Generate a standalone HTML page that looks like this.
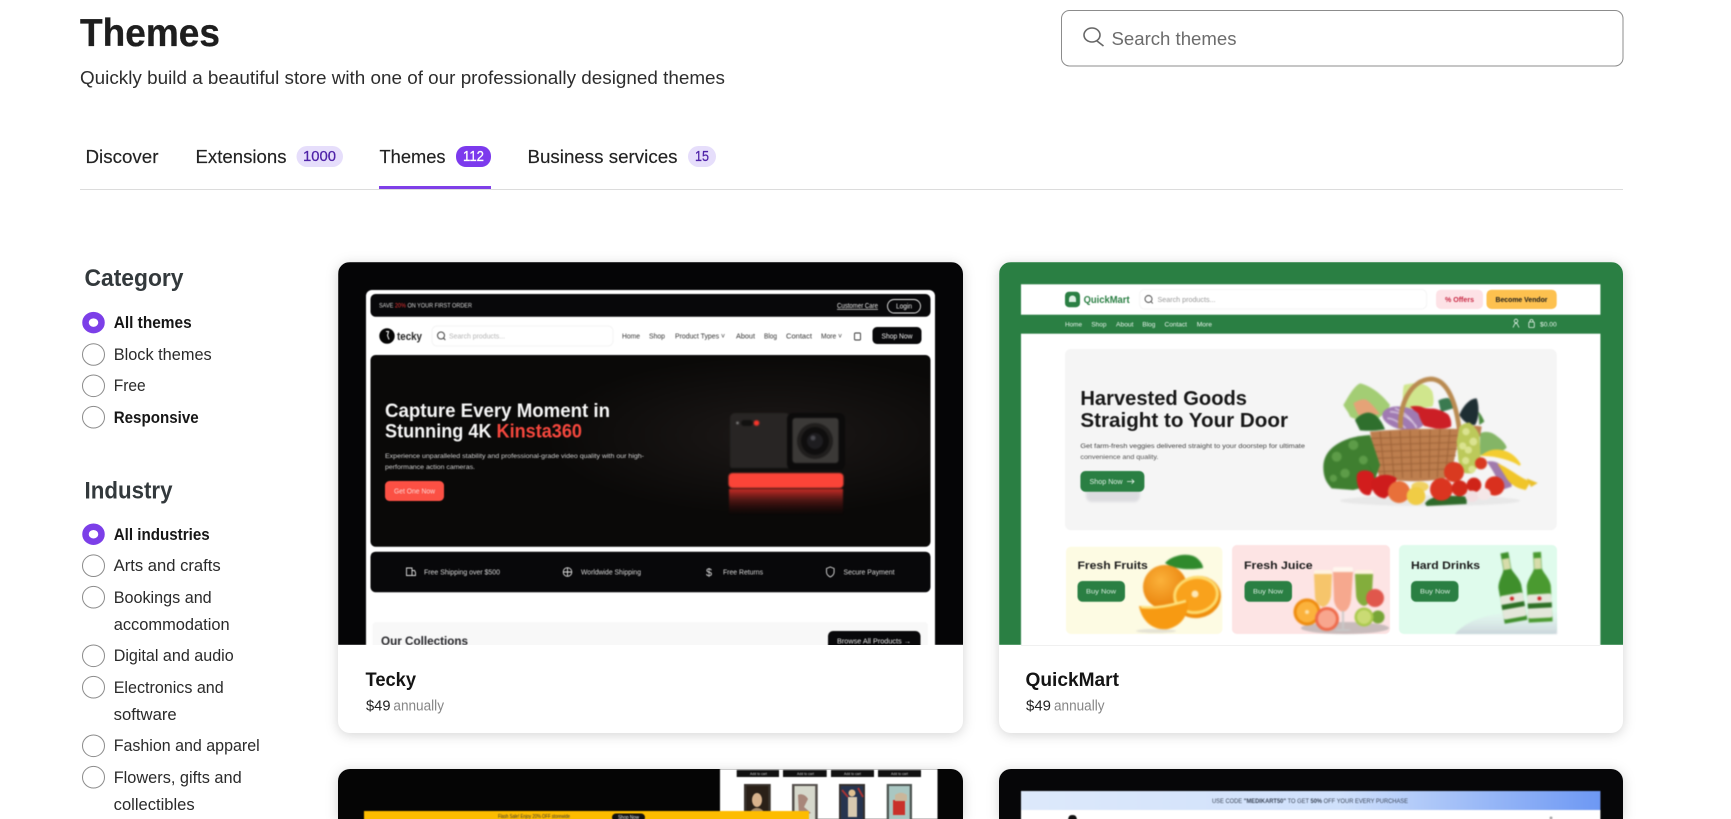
<!DOCTYPE html>
<html lang="en"><head><meta charset="utf-8"><title>Themes</title>
<style>
html,body{margin:0;padding:0;background:#fff;width:1731px;height:819px;overflow:hidden}
svg{display:block;position:absolute;left:0;top:0}
text{font-family:"Liberation Sans",Arial,sans-serif}
.b{font-weight:700}
.t{font-size:18.500px;fill:#222;stroke:#222;stroke-width:.15px}
.i{font-size:16.500px;fill:#2a2a2a}
.ib{font-size:16.500px;fill:#161616;font-weight:700}
.h{font-size:24px;fill:#33393c;font-weight:700}
.cap{font-size:19px;fill:#141414;font-weight:700}
.nb{font-size:14.500px;stroke-width:.25px}
.card{filter:drop-shadow(0 2px 6px rgba(0,0,0,.17))}
.soft{filter:blur(.45px)}
.ill{filter:blur(.8px)}
.softer{filter:blur(1.2px)}
.rd{fill:#fff;stroke:#8b8b8b;stroke-width:1}
.ra{fill:#fff;stroke:#7c3fe8;stroke-width:6.500}
</style></head><body>
<svg width="1731" height="819" viewBox="0 0 1731 819" xmlns="http://www.w3.org/2000/svg">
<defs>
<clipPath id="c1"><path d="M338 645V274a12 12 0 0 1 12-12h601a12 12 0 0 1 12 12V645z"/></clipPath>
<clipPath id="c2"><path d="M999 645V274a12 12 0 0 1 12-12h600a12 12 0 0 1 12 12V645z"/></clipPath>
<clipPath id="c3"><path d="M338 819V781a12 12 0 0 1 12-12h601a12 12 0 0 1 12 12V819z"/></clipPath>
<clipPath id="c4"><path d="M999 819V781a12 12 0 0 1 12-12h600a12 12 0 0 1 12 12V819z"/></clipPath>
<linearGradient id="refl" x1="0" y1="0" x2="0" y2="1"><stop offset="0" stop-color="#e8322a" stop-opacity=".85"/><stop offset=".45" stop-color="#a82520" stop-opacity=".4"/><stop offset="1" stop-color="#500" stop-opacity="0"/></linearGradient>
<radialGradient id="glow" cx=".72" cy=".42" r=".42"><stop offset="0" stop-color="#1c1817"/><stop offset="1" stop-color="#0a0908"/></radialGradient>
<linearGradient id="promo" x1="0" y1="0" x2="1" y2="0"><stop offset="0" stop-color="#dde9fb"/><stop offset=".55" stop-color="#cfe0fb"/><stop offset="1" stop-color="#6d98f4"/></linearGradient>
<linearGradient id="ice" x1="0" y1="0" x2="0" y2="1"><stop offset="0" stop-color="#e4eef0" stop-opacity=".3"/><stop offset="1" stop-color="#c9d4da"/></linearGradient>
<radialGradient id="org" cx=".4" cy=".35" r=".7"><stop offset="0" stop-color="#fbb13a"/><stop offset="1" stop-color="#e87f08"/></radialGradient>
</defs>

<!-- Header -->
<text x="80" y="46" font-size="39" class="b" fill="#1e1e1e" stroke="#1e1e1e" stroke-width=".3" textLength="140" lengthAdjust="spacingAndGlyphs">Themes</text>
<text x="80" y="84" font-size="18.500" fill="#2d2d2d" textLength="645" lengthAdjust="spacingAndGlyphs">Quickly build a beautiful store with one of our professionally designed themes</text>

<rect x="1061.500" y="10.500" width="561.500" height="55.500" rx="8" fill="#fff" stroke="#8c8c8c"/>
<ellipse cx="1092" cy="35" rx="8" ry="7" fill="none" stroke="#666" stroke-width="1.600"/>
<path d="M1097 41L1103.500 46" stroke="#666" stroke-width="1.600" fill="none"/>
<text x="1111.500" y="45" font-size="18.500" fill="#6c6c6c" textLength="125" lengthAdjust="spacingAndGlyphs">Search themes</text>

<!-- Tabs -->
<text x="85.500" y="163" class="t" textLength="73" lengthAdjust="spacingAndGlyphs">Discover</text>
<text x="195.500" y="163" class="t" textLength="91" lengthAdjust="spacingAndGlyphs">Extensions</text>
<rect x="296.500" y="146" width="46.500" height="21" rx="10.500" fill="#e6defb"/>
<text x="303" y="161" class="nb" fill="#4f22a8" stroke="#4f22a8" textLength="33" lengthAdjust="spacingAndGlyphs">1000</text>
<text x="379.500" y="163" class="t" textLength="66" lengthAdjust="spacingAndGlyphs">Themes</text>
<rect x="456" y="146" width="35" height="21" rx="10" fill="#7c3aed"/>
<text x="463" y="161" class="nb" fill="#fff" stroke="#fff" textLength="21" lengthAdjust="spacingAndGlyphs">112</text>
<text x="527.500" y="163" class="t" textLength="150" lengthAdjust="spacingAndGlyphs">Business services</text>
<rect x="688" y="146" width="28" height="21" rx="10.500" fill="#e6defb"/>
<text x="695" y="161" class="nb" fill="#4f22a8" stroke="#4f22a8" textLength="14" lengthAdjust="spacingAndGlyphs">15</text>
<rect x="80" y="189" width="1543" height="1" fill="#dcdcdc"/>
<rect x="379" y="186" width="112" height="3" fill="#7f3fe8"/>

<!-- Sidebar -->
<text x="84.500" y="286" class="h" textLength="99" lengthAdjust="spacingAndGlyphs">Category</text>
<ellipse class="ra" cx="93.500" cy="322.600" rx="8" ry="7.500"/>
<text x="113.700" y="328" class="ib" textLength="78" lengthAdjust="spacingAndGlyphs">All themes</text>
<ellipse class="rd" cx="93.500" cy="354.500" rx="11" ry="10.800"/>
<text x="113.700" y="360" class="i" textLength="98" lengthAdjust="spacingAndGlyphs">Block themes</text>
<ellipse class="rd" cx="93.500" cy="385.800" rx="11" ry="10.800"/>
<text x="113.700" y="391" class="i" textLength="32" lengthAdjust="spacingAndGlyphs">Free</text>
<ellipse class="rd" cx="93.500" cy="417.200" rx="11" ry="10.800"/>
<text x="113.700" y="423" class="ib" textLength="85" lengthAdjust="spacingAndGlyphs">Responsive</text>

<text x="84.500" y="498.500" class="h" textLength="88" lengthAdjust="spacingAndGlyphs">Industry</text>
<ellipse class="ra" cx="93.500" cy="534.200" rx="8" ry="7.500"/>
<text x="113.700" y="540" class="ib" textLength="96" lengthAdjust="spacingAndGlyphs">All industries</text>
<ellipse class="rd" cx="93.500" cy="565.700" rx="11" ry="10.800"/>
<text x="113.700" y="571" class="i" textLength="107" lengthAdjust="spacingAndGlyphs">Arts and crafts</text>
<ellipse class="rd" cx="93.500" cy="597.200" rx="11" ry="10.800"/>
<text x="113.700" y="603" class="i" textLength="98" lengthAdjust="spacingAndGlyphs">Bookings and</text>
<text x="113.700" y="630" class="i" textLength="116" lengthAdjust="spacingAndGlyphs">accommodation</text>
<ellipse class="rd" cx="93.500" cy="655.800" rx="11" ry="10.800"/>
<text x="113.700" y="661" class="i" textLength="120" lengthAdjust="spacingAndGlyphs">Digital and audio</text>
<ellipse class="rd" cx="93.500" cy="687.200" rx="11" ry="10.800"/>
<text x="113.700" y="693" class="i" textLength="110" lengthAdjust="spacingAndGlyphs">Electronics and</text>
<text x="113.700" y="720" class="i" textLength="63" lengthAdjust="spacingAndGlyphs">software</text>
<ellipse class="rd" cx="93.500" cy="745.800" rx="11" ry="10.800"/>
<text x="113.700" y="751" class="i" textLength="146" lengthAdjust="spacingAndGlyphs">Fashion and apparel</text>
<ellipse class="rd" cx="93.500" cy="777.200" rx="11" ry="10.800"/>
<text x="113.700" y="783" class="i" textLength="128" lengthAdjust="spacingAndGlyphs">Flowers, gifts and</text>
<text x="113.700" y="810" class="i" textLength="81" lengthAdjust="spacingAndGlyphs">collectibles</text>

<!-- Card bases -->
<rect class="card" x="338" y="262" width="625" height="471" rx="12" fill="#fff"/>
<rect class="card" x="999" y="262" width="624" height="471" rx="12" fill="#fff"/>
<path class="card" d="M338 819V781a12 12 0 0 1 12-12h601a12 12 0 0 1 12 12V819z" fill="#050505"/>
<path class="card" d="M999 819V781a12 12 0 0 1 12-12h600a12 12 0 0 1 12 12V819z" fill="#060608"/>

<!-- Tecky preview -->
<g clip-path="url(#c1)"><g class="soft">
<rect x="338" y="262" width="626" height="383" fill="#050506"/>
<path d="M366 645V296a6 6 0 0 1 6-6h557a6 6 0 0 1 6 6V645z" fill="#fff"/>
<rect x="370.500" y="294" width="560" height="22.700" rx="5" fill="#08080a"/>
<text x="379" y="307.500" font-size="6.500" fill="#d8d8d8" textLength="93" lengthAdjust="spacingAndGlyphs">SAVE <tspan fill="#e33">20%</tspan> ON YOUR FIRST ORDER</text>
<text x="837" y="308" font-size="7" fill="#e8e8e8" text-decoration="underline" textLength="41" lengthAdjust="spacingAndGlyphs">Customer Care</text>
<rect x="887.500" y="299.500" width="33" height="13.500" rx="6.700" fill="none" stroke="#e8e8e8" stroke-width=".9"/>
<text x="896" y="308.500" font-size="7" fill="#eee" textLength="16" lengthAdjust="spacingAndGlyphs">Login</text>

<circle cx="387" cy="336" r="7.700" fill="#050505"/>
<path d="M386 331.500l2.500 0-1 4 1.500 4" stroke="#fff" fill="none" stroke-width="1"/>
<text x="397" y="340" font-size="11" class="b" fill="#222" textLength="25" lengthAdjust="spacingAndGlyphs">tecky</text>
<rect x="432" y="326" width="181" height="20" rx="5" fill="#fff" stroke="#f4f4f4"/>
<circle cx="441" cy="335.500" r="3.500" fill="none" stroke="#444" stroke-width="1"/>
<path d="M443.500 338l1.800 2" stroke="#444"/>
<text x="449" y="338.500" font-size="7" fill="#b5b5b5" textLength="56" lengthAdjust="spacingAndGlyphs">Search products...</text>
<g font-size="7" fill="#333">
<text x="622" y="338.500" textLength="18" lengthAdjust="spacingAndGlyphs">Home</text>
<text x="649" y="338.500" textLength="16" lengthAdjust="spacingAndGlyphs">Shop</text>
<text x="675" y="338.500" textLength="50" lengthAdjust="spacingAndGlyphs">Product Types ˅</text>
<text x="736" y="338.500" textLength="19" lengthAdjust="spacingAndGlyphs">About</text>
<text x="764" y="338.500" textLength="13" lengthAdjust="spacingAndGlyphs">Blog</text>
<text x="786" y="338.500" textLength="26" lengthAdjust="spacingAndGlyphs">Contact</text>
<text x="821" y="338.500" textLength="21" lengthAdjust="spacingAndGlyphs">More ˅</text>
</g>
<rect x="854.500" y="333" width="6" height="7" rx="1" fill="none" stroke="#333" stroke-width=".9"/>
<rect x="872.500" y="327" width="49" height="17" rx="4.500" fill="#08080a"/>
<text x="881.500" y="338.500" font-size="7" fill="#eee" textLength="31" lengthAdjust="spacingAndGlyphs">Shop Now</text>

<rect x="370.500" y="355" width="560" height="191.700" rx="5" fill="url(#glow)"/>
<text x="385" y="417" font-size="19" class="b" fill="#f5f5f5" textLength="225" lengthAdjust="spacingAndGlyphs">Capture Every Moment in</text>
<text x="385" y="437.500" font-size="19" class="b" fill="#f5f5f5" textLength="197" lengthAdjust="spacingAndGlyphs">Stunning 4K <tspan fill="#f4473d">Kinsta360</tspan></text>
<text x="385" y="458" font-size="6.500" fill="#cfcfcf" textLength="259" lengthAdjust="spacingAndGlyphs">Experience unparalleled stability and professional-grade video quality with our high-</text>
<text x="385" y="469" font-size="6.500" fill="#cfcfcf" textLength="90" lengthAdjust="spacingAndGlyphs">performance action cameras.</text>
<rect x="385" y="481" width="59" height="20" rx="4.500" fill="#fb5044"/>
<text x="394" y="493.500" font-size="7" fill="#fbd8d5" textLength="41" lengthAdjust="spacingAndGlyphs">Get One Now</text>

<!-- camera -->
<g class="ill">
<rect x="730" y="413" width="60" height="57" rx="5" fill="#282524"/>
<rect x="730" y="468" width="113" height="6" fill="#100f0e"/>
<rect x="787" y="413" width="58" height="57" rx="6" fill="#0c0b0b"/>
<rect x="792.500" y="418" width="46" height="45" rx="3" fill="#3b3937"/>
<circle cx="815" cy="441" r="18" fill="#201e1d"/>
<circle cx="815" cy="441" r="14" fill="#0f0e0e"/>
<circle cx="815" cy="441" r="8" fill="#1e1d20"/>
<circle cx="813" cy="438" r="2.500" fill="#4a4a50"/>
<rect x="741" y="420" width="12" height="6" rx="3" fill="#121110"/>
<circle cx="756.500" cy="423" r="2.800" fill="#f8352a"/>
<circle cx="737.500" cy="423" r="1.200" fill="#999"/>
<rect x="728.500" y="473" width="115" height="15" rx="4" fill="#fb4438"/>
<rect x="729" y="489" width="114" height="26" fill="url(#refl)"/>
</g>

<rect x="370.500" y="551.700" width="560" height="40.500" rx="5" fill="#08080a"/>
<g fill="none" stroke="#ddd" stroke-width=".9">
<path d="M406.500 568h5.500v7.500h-5.500zM412 570.500h2.500l1 2v3h-3.500"/>
<circle cx="567.500" cy="572" r="4.300"/><path d="M563 572h9M567.500 567.700v8.600"/>
<path d="M826.500 568.500l3.800-1.500 3.800 1.500v3.500c0 2.600-1.800 4-3.800 5-2-1-3.800-2.400-3.800-5z"/>
</g>
<text x="706" y="576" font-size="11" fill="#ddd" textLength="6" lengthAdjust="spacingAndGlyphs">$</text>
<g font-size="7" fill="#d8d8d8">
<text x="424" y="574.500" textLength="76" lengthAdjust="spacingAndGlyphs">Free Shipping over $500</text>
<text x="581" y="574.500" textLength="60" lengthAdjust="spacingAndGlyphs">Worldwide Shipping</text>
<text x="723" y="574.500" textLength="40" lengthAdjust="spacingAndGlyphs">Free Returns</text>
<text x="843.500" y="574.500" textLength="51" lengthAdjust="spacingAndGlyphs">Secure Payment</text>
</g>
<rect x="372.500" y="622" width="555.500" height="30" rx="4" fill="#f8f8f8"/>
<text x="381" y="645" font-size="11.500" class="b" fill="#26262a" textLength="87" lengthAdjust="spacingAndGlyphs">Our Collections</text>
<rect x="828" y="631" width="92.500" height="24" rx="5" fill="#08080a"/>
<text x="837" y="643.500" font-size="7" fill="#e8e8e8" textLength="74" lengthAdjust="spacingAndGlyphs">Browse All Products →</text>
</g></g>

<!-- QuickMart preview -->
<g clip-path="url(#c2)"><g class="soft">
<rect x="999" y="262" width="625" height="383" fill="#2a7f43"/>
<rect x="1021" y="284.300" width="579.400" height="30.400" fill="#fff"/>
<rect x="1021" y="333.700" width="579.400" height="312" fill="#fff"/>
<rect x="1065" y="291.700" width="15" height="15.500" rx="4" fill="#2a7f43"/>
<path d="M1069 302v-3a3.500 3.500 0 0 1 7 0v3z" fill="#dcefe2"/>
<text x="1083.600" y="303" font-size="10.500" class="b" fill="#2a7f43" textLength="46" lengthAdjust="spacingAndGlyphs">QuickMart</text>
<rect x="1139.600" y="289.500" width="287" height="19.500" rx="5" fill="#fff" stroke="#f5f5f5"/>
<circle cx="1148.500" cy="299" r="3.500" fill="none" stroke="#444" stroke-width=".9"/>
<path d="M1151 301.500l1.800 2" stroke="#444" stroke-width=".9"/>
<text x="1157.500" y="302" font-size="7" fill="#9a9a9a" textLength="58" lengthAdjust="spacingAndGlyphs">Search products...</text>
<rect x="1436" y="289.700" width="47" height="19.300" rx="5" fill="#fde2e6"/>
<text x="1445" y="302" font-size="7" class="b" fill="#c92a45" textLength="29" lengthAdjust="spacingAndGlyphs">% Offers</text>
<rect x="1486.500" y="289.700" width="70.200" height="19.300" rx="5" fill="#fdc14f"/>
<text x="1495.500" y="302" font-size="7" class="b" fill="#1c1c1c" textLength="52" lengthAdjust="spacingAndGlyphs">Become Vendor</text>
<g font-size="6.800" fill="#e8f5ec">
<text x="1065" y="326.500" textLength="17" lengthAdjust="spacingAndGlyphs">Home</text>
<text x="1091.400" y="326.500" textLength="15" lengthAdjust="spacingAndGlyphs">Shop</text>
<text x="1116" y="326.500" textLength="17.500" lengthAdjust="spacingAndGlyphs">About</text>
<text x="1142.400" y="326.500" textLength="13" lengthAdjust="spacingAndGlyphs">Blog</text>
<text x="1164.500" y="326.500" textLength="22.500" lengthAdjust="spacingAndGlyphs">Contact</text>
<text x="1196.700" y="326.500" textLength="15.300" lengthAdjust="spacingAndGlyphs">More</text>
<text x="1540" y="326.500" textLength="16.700" lengthAdjust="spacingAndGlyphs">$0.00</text>
</g>
<g fill="none" stroke="#e8f5ec" stroke-width=".8">
<circle cx="1516" cy="321" r="1.800"/><path d="M1513 327.500l2-4h2l2 4"/>
<rect x="1528.800" y="322" width="5.500" height="5.500" rx=".8"/><path d="M1530 322v-1a1.500 1.500 0 0 1 3 0v1"/>
</g>
<rect x="1065" y="349" width="491.700" height="181.300" rx="6" fill="#f5f5f5"/>
<text x="1080.400" y="405" font-size="20" class="b" fill="#181818" textLength="166.600" lengthAdjust="spacingAndGlyphs">Harvested Goods</text>
<text x="1080.400" y="427" font-size="20" class="b" fill="#181818" textLength="207.600" lengthAdjust="spacingAndGlyphs">Straight to Your Door</text>
<text x="1080.400" y="448" font-size="6.700" fill="#444" textLength="224.500" lengthAdjust="spacingAndGlyphs">Get farm-fresh veggies delivered straight to your doorstep for ultimate</text>
<text x="1080.400" y="459" font-size="6.700" fill="#555" textLength="78" lengthAdjust="spacingAndGlyphs">convenience and quality.</text>
<rect x="1086" y="484" width="54" height="18" rx="6" fill="#889" opacity=".22" class="softer"/>
<rect x="1080.400" y="471" width="64" height="20.700" rx="5" fill="#2a7f43"/>
<text x="1089.500" y="483.800" font-size="7" fill="#dff0e5" textLength="33" lengthAdjust="spacingAndGlyphs">Shop Now</text>
<path d="M1127 481.500h7m-2.300-2.200l2.300 2.200-2.300 2.200" stroke="#e8f5ec" fill="none" stroke-width=".8"/>

<!-- basket illustration -->
<g class="ill"><g transform="translate(1300 370) scale(.33333)">
<ellipse cx="390" cy="392" rx="270" ry="16" fill="#e8e8e8"/>
<path d="M130 105c15-25 30-55 50-65 25 5 60 25 90 65-5 20-25 30-40 45-30 5-65 0-80-10-5-15-15-25-20-35z" fill="#a3cd74"/>
<path d="M160 100c15-10 30-15 40-10 15 10 30 30 40 42-15 3-40 3-65 3-5-10-10-22-15-35z" fill="#e5a377"/>
<path d="M165 150c10-12 25-22 40-22 15 0 35 12 50 50-30 5-60 5-75 3-5-10-10-20-15-31z" fill="#2f6f2d"/>
<path d="M312 45c20-5 65-15 85 20 5 20 5 35 0 45-25 5-65 5-85 10-5-25-5-55 0-75z" fill="#d0e68d"/>
<path d="M415 92c10-6 20-8 30-8 10 10 15 20 18 30l-40 12z" fill="#3a7a50"/>
<path d="M478 135c10-25 30-50 52-50 10 30 5 65-5 80-20 0-35-10-47-30z" fill="#1e2e33"/>
<path d="M535 125c8 8 14 20 18 30l-15 10z" fill="#4b8a3e"/>
<path d="M540 190c15-8 35-5 50 8 15 10 28 25 30 35-15 15-40 20-80 22z" fill="#84b566"/>
<ellipse cx="310" cy="145" rx="64" ry="34" transform="rotate(12 310 145)" fill="#a07ab2"/>
<path d="M270 125c30 0 60 20 80 45M285 115c25 10 50 30 65 60M262 145c20 0 40 15 55 30" stroke="#dccbe3" stroke-width="4" fill="none"/>
<path d="M330 110c15-3 30-3 40 3 10 3 20 3 30 3 20 3 35 10 45 18 8 12 10 25 8 36-15 6-30 8-45 6-15-3-25-6-35-8-10-13-15-28-18-38-8-5-17-12-25-20z" fill="#cc1f26"/>
<path d="M210 185c90-8 180-10 272-8l-30 143c-60 18-150 18-215 2z" fill="#bd7e4e"/>
<g stroke="#8f572e" stroke-width="3" fill="none" opacity=".7">
<path d="M212 205l268-8M216 225l260-8M220 245l252-8M224 265l244-8M228 285l236-8M232 305l224-8"/>
<path d="M240 185l15 138M270 183l12 140M300 182l8 142M330 181l5 143M360 180l2 144M390 179l-3 145M420 178l-8 144M450 178l-14 142"/>
</g>
<path d="M302 175c-6-70 30-145 90-148 50 0 75 70 85 145" stroke="#b98a50" stroke-width="14" fill="none"/>
<path d="M470 172c20-8 60-6 75-2l-5 30-65 5z" fill="#bd7e4e"/>
<path d="M478 170c10-8 20-12 30-13 15 10 25 25 30 38l4 70c-5 20-15 35-25 45h-22c-10-12-17-27-20-40l-5-55z" fill="#bcc95a"/>
<g fill="#dbe390"><circle cx="498" cy="185" r="11"/><circle cx="520" cy="215" r="12"/><circle cx="488" cy="228" r="11"/><circle cx="505" cy="240" r="11"/><circle cx="497" cy="272" r="11"/><circle cx="516" cy="298" r="11"/></g>
<path d="M70 290c0-50 50-90 140-95l30 90-20 60-60 15-65-5c-20-20-25-40-25-65z" fill="#3f7f30"/>
<g fill="#5d9c48"><circle cx="110" cy="260" r="15"/><circle cx="160" cy="225" r="15"/><circle cx="135" cy="310" r="14"/><circle cx="190" cy="270" r="13"/><circle cx="100" cy="325" r="11"/></g>
<path d="M550 255c35-25 85-15 110 30-20-15-70-30-110-30z" fill="#f4cd30" stroke="#f4cd30" stroke-width="6"/>
<path d="M560 275c45-10 75 40 75 75l-30 10c-15-40-30-65-45-85z" fill="#a07aac"/>
<path d="M592 280c30 10 70 45 100 55l-15 25c-30-5-50-20-60-40z" fill="#f0c52a"/>
<path d="M680 325l33 14-20 12z" fill="#e9bf2a"/>
<path d="M170 320c0-20 30-25 50-10l5 30-15 35c-25 5-40-20-40-55z" fill="#d21d1d"/>
<path d="M205 285l15 25" stroke="#3b7d2e" stroke-width="5"/>
<path d="M215 335c15-25 55-25 75-10l-10 40-25 20c-25 0-45-25-40-50z" fill="#ce1c1c"/>
<circle cx="297" cy="366" r="33" fill="#e8703a"/>
<ellipse cx="360" cy="350" rx="26" ry="15" fill="#f0d163"/>
<ellipse cx="348" cy="378" rx="28" ry="27" fill="#f0cc45"/>
<path d="M375 400c20-25 60-25 125-20l0 22-120 6z" fill="#2f6a2a"/>
<circle cx="424" cy="358" r="34" fill="#db3520"/>
<circle cx="462" cy="306" r="30" fill="#d93a20"/>
<circle cx="479" cy="355" r="24" fill="#d22a1a"/>
<circle cx="522" cy="345" r="22" fill="#cf2418"/>
<circle cx="584" cy="348" r="29" fill="#d9301e"/>
<circle cx="543" cy="280" r="18" fill="#d93a20"/>
<ellipse cx="516" cy="379" rx="20" ry="17" fill="#f2dfe2"/>
<ellipse cx="552" cy="372" rx="20" ry="18" fill="#f5e7e7"/>
</g></g>

<!-- promo tiles -->
<rect x="1066" y="546.700" width="156.400" height="87.300" rx="5" fill="#fdfbe3"/>
<rect x="1232" y="545" width="158" height="89" rx="5" fill="#fde4e4"/>
<rect x="1399" y="545" width="158" height="89" rx="5" fill="#dffbec"/>
<text x="1077.500" y="569" font-size="11" class="b" fill="#1c1c1c" textLength="70.300" lengthAdjust="spacingAndGlyphs">Fresh Fruits</text>
<text x="1244" y="569" font-size="11" class="b" fill="#1c1c1c" textLength="68.600" lengthAdjust="spacingAndGlyphs">Fresh Juice</text>
<text x="1411" y="569" font-size="11" class="b" fill="#1c1c1c" textLength="69" lengthAdjust="spacingAndGlyphs">Hard Drinks</text>
<rect x="1077.500" y="581" width="47.500" height="20.700" rx="5" fill="#2a7f43"/>
<rect x="1244.500" y="581" width="47.500" height="20.700" rx="5" fill="#2a7f43"/>
<rect x="1411" y="581" width="47.500" height="20.700" rx="5" fill="#2a7f43"/>
<g font-size="6.800" fill="#d8ecdf">
<text x="1086" y="593.500" textLength="30" lengthAdjust="spacingAndGlyphs">Buy Now</text>
<text x="1253" y="593.500" textLength="30" lengthAdjust="spacingAndGlyphs">Buy Now</text>
<text x="1420" y="593.500" textLength="30" lengthAdjust="spacingAndGlyphs">Buy Now</text>
</g>
<g class="ill">
<!-- oranges -->
<path d="M1165 563c8-9 26-11 33-4 3 3 5 6 5 9-12 2-28 2-38-5z" fill="#2f8a2c"/>
<ellipse cx="1156" cy="631" rx="20" ry="2" fill="#e4e2d4"/>
<circle cx="1165" cy="587" r="22" fill="url(#org)"/>
<ellipse cx="1197" cy="597" rx="24" ry="21" transform="rotate(-10 1197 597)" fill="#ef8d0c"/>
<ellipse cx="1196" cy="595" rx="23" ry="19" transform="rotate(-10 1196 595)" fill="#fddb6e"/>
<ellipse cx="1196" cy="595" rx="20" ry="16" transform="rotate(-10 1196 595)" fill="#f9a21c"/>
<circle cx="1195" cy="594" r="3.500" fill="#fde9b8"/>
<path d="M1139 606c15 3 35-1 49-6 1 17-8 26-20 29-14 2-26-7-29-23z" fill="#f79a12"/>
<path d="M1141 607c15 2 31-2 45-6" stroke="#fde27f" stroke-width="2.500" fill="none"/>
<!-- juice -->
<ellipse cx="1345" cy="628" rx="44" ry="6" fill="#b5aeae" opacity=".75"/>
<rect x="1314" y="570" width="18" height="5" rx="2" fill="#fff3e2"/>
<path d="M1314 574h18l-1 22c-1 6-4 10-8 11-4-1-8-5-8-11z" fill="#f6c56b"/>
<rect x="1333" y="567" width="20" height="6" rx="2" fill="#fff6ee"/>
<path d="M1333 572h20l-2 28c-1 7-4 11-8 12-4-1-8-5-9-12z" fill="#f6a88e"/>
<path d="M1343 611v18m-7 1h14" stroke="#c8c8c8" stroke-width="1.800"/>
<rect x="1355" y="570" width="18" height="5" rx="2" fill="#fff3df"/>
<path d="M1355 574h18l-1 20c-1 7-4 11-8 12-4-1-8-5-8-12z" fill="#83ad3c"/>
<circle cx="1375" cy="598" r="9" fill="#e0574c"/>
<circle cx="1307" cy="612" r="13.500" fill="#ee8b0e"/><circle cx="1307" cy="612" r="10.500" fill="#fbb23c"/><circle cx="1307" cy="612" r="2" fill="#fde2a8"/>
<circle cx="1327" cy="619" r="12" fill="#ef6a4a"/><circle cx="1327" cy="619" r="9" fill="#f8a68e"/>
<circle cx="1378" cy="617" r="6.500" fill="#77a536"/>
<circle cx="1364" cy="617" r="9.500" fill="#a9c94c"/><circle cx="1364" cy="617" r="7" fill="#cadb74"/>
<!-- beers -->
<path d="M1455 634c10-12 30-20 55-21l47-1v22z" fill="url(#ice)"/>
<g transform="rotate(-10 1512 590)">
<path d="M1507 552h8v16c0 4 6 10 7 18v36h-23v-36c1-8 8-14 8-18z" fill="#3f8f2c"/>
<rect x="1507.500" y="558" width="7" height="11" fill="#d7dcaa"/>
<rect x="1499" y="594" width="23" height="24" rx="2" fill="#e4e7da"/>
<rect x="1499" y="603" width="23" height="5" fill="#2d6f25"/>
<circle cx="1510.500" cy="598.500" r="2" fill="#c22"/>
</g>
<g transform="rotate(-3 1540 590)">
<path d="M1535 552h8v16c0 4 7 10 8 18v36h-24v-36c1-8 8-14 8-18z" fill="#4a9a30"/>
<rect x="1535.500" y="558" width="7" height="11" fill="#d7dcaa"/>
<rect x="1527" y="594" width="24" height="24" rx="2" fill="#e4e7da"/>
<rect x="1527" y="603" width="24" height="5" fill="#2d6f25"/>
<circle cx="1539" cy="598.500" r="2" fill="#c22"/>
</g>
</g>
</g></g>
<rect x="1021" y="645" width="579" height="1" fill="#f0f0f0"/>

<!-- captions -->
<text x="365.500" y="686" class="cap" textLength="50.500" lengthAdjust="spacingAndGlyphs">Tecky</text>
<text x="366" y="710.500" font-size="15" fill="#222" textLength="24.500" lengthAdjust="spacingAndGlyphs">$49</text>
<text x="393.400" y="710.500" font-size="15" fill="#868686" textLength="50.600" lengthAdjust="spacingAndGlyphs">annually</text>
<text x="1025.500" y="686" class="cap" textLength="93.500" lengthAdjust="spacingAndGlyphs">QuickMart</text>
<text x="1026" y="710.500" font-size="15" fill="#222" textLength="25" lengthAdjust="spacingAndGlyphs">$49</text>
<text x="1054" y="710.500" font-size="15" fill="#868686" textLength="50.500" lengthAdjust="spacingAndGlyphs">annually</text>

<!-- Row 2 left preview -->
<g clip-path="url(#c3)"><g class="soft">
<rect x="720" y="769" width="217.500" height="50" fill="#fff"/>
<g fill="#111"><rect x="736.700" y="770" width="42.300" height="7"/><rect x="783" y="770" width="43.700" height="7"/><rect x="831" y="770" width="43" height="7"/><rect x="878" y="770" width="43" height="7"/></g>
<g font-size="3.500" fill="#ccc">
<text x="750" y="775">Add to cart</text><text x="797" y="775">Add to cart</text><text x="844" y="775">Add to cart</text><text x="891" y="775">Add to cart</text>
</g>
<rect x="744" y="784" width="26.700" height="40" fill="#38322c"/><rect x="746.500" y="786" width="21.700" height="36" fill="#2a2018"/>
<ellipse cx="757" cy="800" rx="5" ry="7" fill="#d8b28c"/><path d="M748 822c0-10 4-14 9-14s9 4 9 14z" fill="#a78c6a"/>
<rect x="792" y="784" width="25.700" height="40" fill="#55504c"/><rect x="794.500" y="786" width="20.700" height="36" fill="#d6d8cc"/>
<path d="M798 795c3-2 8 0 10 4l-4 8 7 6-12 4z" fill="#a8867a"/>
<rect x="839" y="784" width="26" height="40" fill="#33302e"/><rect x="841" y="786" width="22" height="36" fill="#27344f"/>
<rect x="848" y="797" width="9" height="20" fill="#d8c9b0"/><circle cx="852" cy="793" r="3.500" fill="#e0c090"/>
<path d="M842 790l6 7M858 788l5 9" stroke="#a33" stroke-width="2"/>
<rect x="886.700" y="784" width="25.300" height="40" fill="#4d5552"/><rect x="889" y="786" width="20.700" height="36" fill="#a9c7c2"/>
<path d="M893 800h12v15h-12z" fill="#c9302a"/><path d="M895 795c4-3 8-3 12 0v6h-12z" fill="#cab69a"/>
<rect x="364" y="811" width="445" height="10" fill="#fdbc00"/>
<text x="498" y="818" font-size="5.500" fill="#333" textLength="72" lengthAdjust="spacingAndGlyphs">Flash Sale! Enjoy 20% OFF storewide</text>
<rect x="612" y="813.500" width="33" height="8" rx="4" fill="#111"/>
<text x="618" y="819" font-size="5" fill="#eee" textLength="21" lengthAdjust="spacingAndGlyphs">Shop Now</text>
</g></g>

<!-- Row 2 right preview -->
<g clip-path="url(#c4)"><g class="soft">
<rect x="1021" y="791" width="579.400" height="19" fill="url(#promo)"/>
<rect x="1021" y="810" width="579.400" height="12" fill="#fff"/>
<text x="1212" y="803" font-size="6.500" fill="#3c4658" textLength="196" lengthAdjust="spacingAndGlyphs">USE CODE <tspan font-weight="700">"MEDIKART50"</tspan> TO GET <tspan font-weight="700">50%</tspan> OFF YOUR EVERY PURCHASE</text>
<path d="M1068 822c0-5 1-7 4.500-7s4.500 2 4.500 7z" fill="#111"/>
<circle cx="1551" cy="818" r="1.500" fill="#aaa"/>
</g></g>
</svg>
</body></html>
